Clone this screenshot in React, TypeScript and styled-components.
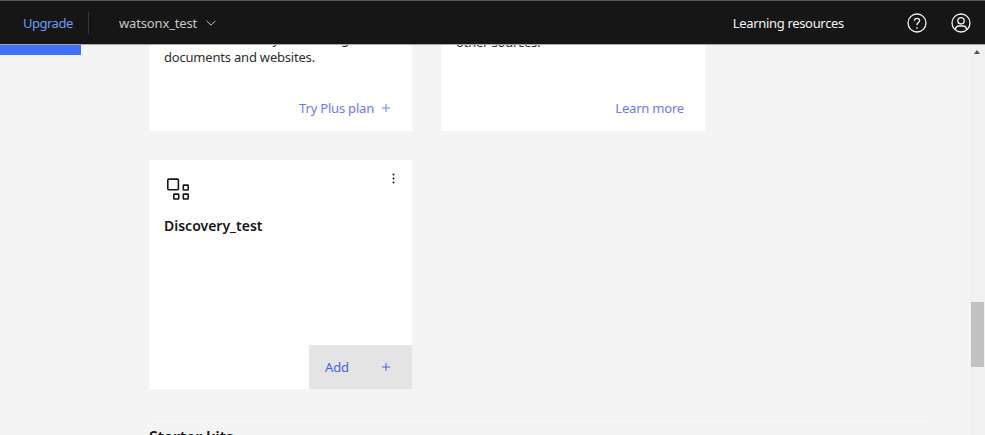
import React from "react";
import styled, { createGlobalStyle } from "styled-components";

const Global = createGlobalStyle`
  html, body { margin: 0; padding: 0; height: 100%; overflow: hidden; background: #f4f4f4; }
  * { box-sizing: border-box; }
  body { font-family: "Noto Sans", "Open Sans", "Liberation Sans", sans-serif; }
`;

const Page = styled.div`
  width: 985px;
  height: 435px;
  display: flex;
  flex-direction: column;
  overflow: hidden;
  background: #f4f4f4;
`;

const Header = styled.header`
  flex: 0 0 45px;
  height: 45px;
  display: flex;
  align-items: center;
  background: #161616;
  border-top: 1px solid #565656;
  border-bottom: 1px solid #a8a8a8;
  color: #f4f4f4;
  font-size: 13px;
`;

const Upgrade = styled.a`
  margin-left: 23px;
  width: 65px;
  color: #6c9cf5;
  letter-spacing: -0.5px;
`;

const Divider = styled.span`
  width: 1px;
  height: 22px;
  background: #393939;
`;

const Account = styled.div`
  margin-left: 30px;
  display: flex;
  align-items: center;
  gap: 9px;
  color: #c6c6c6;
  letter-spacing: -0.15px;
`;

const Resources = styled.a`
  margin-left: auto;
  color: #f4f4f4;
  letter-spacing: -0.32px;
`;

const IconSlot = styled.span<{ $left: number }>`
  display: flex;
  margin-left: ${(p) => p.$left}px;
`;

const Body = styled.div`
  flex: 1;
  min-height: 0;
  display: flex;
  overflow: hidden;
`;

const Main = styled.main`
  flex: 1;
  min-width: 0;
  display: flex;
  overflow: hidden;
`;

const Rail = styled.div`
  flex: 0 0 81px;
`;

const RailBar = styled.div`
  height: 10px;
  background: #4270fb;
`;

const Content = styled.div`
  margin-left: 68px;
  width: 778px;
  margin-top: -49px;
  flex: none;
`;

const CardRow = styled.div`
  display: flex;
  gap: 29px;
  margin-bottom: 29px;
`;

const Card = styled.article<{ $height: number; $width: number }>`
  position: relative;
  width: ${(p) => p.$width}px;
  height: ${(p) => p.$height}px;
  background: #fff;
  display: flex;
  flex-direction: column;
`;

const CardText = styled.p<{ $top: number }>`
  margin: 0;
  padding: ${(p) => p.$top}px 15px 0;
  font-size: 13px;
  line-height: 18px;
  color: #2e2e2e;
  letter-spacing: -0.2px;
`;

const CardLink = styled.a<{ $right: number }>`
  margin-top: auto;
  padding: 0 ${(p) => p.$right}px 14px 0;
  display: flex;
  justify-content: flex-end;
  align-items: center;
  gap: 8px;
  color: #6a78f6;
  font-size: 13px;
  line-height: 18px;
  letter-spacing: -0.2px;
`;

const ProductIcon = styled.span`
  display: flex;
  margin: 17px 0 0 16px;
`;

const CardTitle = styled.h3`
  margin: 15px 0 0 15px;
  font-size: 14px;
  line-height: 20px;
  font-weight: 600;
  color: #161616;
`;

const KebabBtn = styled.span`
  position: absolute;
  top: 13px;
  right: 17px;
  display: flex;
`;

const AddButton = styled.button`
  margin-top: auto;
  align-self: flex-end;
  width: 103px;
  height: 44px;
  padding: 0 22px 0 16px;
  border: 0;
  background: #e4e4e4;
  display: flex;
  align-items: center;
  justify-content: space-between;
  color: #4a5fe0;
  font: inherit;
  font-size: 13px;
  letter-spacing: -0.1px;
`;

const SectionRule = styled.hr`
  margin: 29px 0 0;
  border: 0;
  height: 1px;
  background: #eeeeee;
`;

const SectionTitle = styled.h2`
  margin: 8px 0 0;
  font-size: 16px;
  line-height: 20px;
  font-weight: 600;
  letter-spacing: -0.2px;
  color: #161616;
`;

const Scrollbar = styled.div`
  position: relative;
  flex: 0 0 15px;
  background: #f1f1f1;
`;

const ScrollUp = styled.span`
  position: absolute;
  top: 5px;
  left: 4px;
  width: 0;
  height: 0;
  border-left: 3.5px solid transparent;
  border-right: 3.5px solid transparent;
  border-bottom: 4px solid #505050;
`;

const ScrollThumb = styled.span`
  position: absolute;
  top: 257px;
  left: 1px;
  width: 13px;
  height: 65px;
  background: #c1c1c1;
`;

const Plus = ({ color }: { color: string }) => (
  <svg width="8" height="8" viewBox="0 0 8 8" fill="none" stroke={color} strokeWidth="1">
    <path d="M4 0v8M0 4h8" />
  </svg>
);

export default function App() {
  return (
    <Page>
      <Global />
      <Header>
        <Upgrade>Upgrade</Upgrade>
        <Divider />
        <Account>
          watsonx_test
          <svg width="10" height="6" viewBox="0 0 10 6" fill="none" stroke="#c6c6c6" strokeWidth="1">
            <path d="M.6.8L5 5.2 9.4.8" />
          </svg>
        </Account>
        <Resources>Learning resources</Resources>
        <IconSlot $left={63}>
          <svg width="20" height="20" viewBox="0 0 20 20" fill="none" stroke="#f4f4f4" strokeWidth="1.3">
            <circle cx="10" cy="10" r="9" />
            <path d="M7.4 7.8c0-1.5 1.1-2.5 2.6-2.5s2.6 1 2.6 2.3c0 1.1-.6 1.7-1.5 2.3-.8.5-1.1 1-1.1 1.9v.5" />
            <circle cx="10" cy="14.9" r=".5" fill="#f4f4f4" strokeWidth=".6" />
          </svg>
        </IconSlot>
        <IconSlot $left={24}>
          <svg width="20" height="20" viewBox="0 0 20 20" fill="none" stroke="#f4f4f4" strokeWidth="1.3">
            <circle cx="10" cy="10" r="9" />
            <circle cx="10" cy="7.8" r="3.2" />
            <path d="M4.4 16.6c.3-2.2 1.5-3.6 3.4-3.6h4.4c1.9 0 3.1 1.4 3.4 3.6" />
          </svg>
        </IconSlot>
        <IconSlot $left={14} />
      </Header>
      <Body>
        <Main>
          <Rail>
            <RailBar />
          </Rail>
          <Content>
            <CardRow>
              <Card $height={135} $width={263}>
                <CardText $top={34}>
                  Get answers from your existing
                  <br />
                  documents and websites.
                </CardText>
                <CardLink $right={22}>
                  Try Plus plan
                  <Plus color="#6a78f6" />
                </CardLink>
              </Card>
              <Card $height={135} $width={264}>
                <CardText $top={19}>
                  Search content from
                  <br />
                  other sources.
                </CardText>
                <CardLink $right={21}>Learn more</CardLink>
              </Card>
            </CardRow>
            <CardRow>
              <Card $height={229} $width={263}>
                <ProductIcon>
                  <svg width="24" height="24" viewBox="0 0 24 24" fill="none" stroke="#161616" strokeWidth="1.6">
                    <rect x="2.8" y="2.1" width="10.6" height="10.6" rx="1" />
                    <rect x="18.3" y="8.1" width="4.9" height="4.9" rx=".6" />
                    <rect x="8.8" y="17.1" width="4.9" height="4.9" rx=".6" />
                    <rect x="18.3" y="17.1" width="4.9" height="4.9" rx=".6" />
                  </svg>
                </ProductIcon>
                <CardTitle>Discovery_test</CardTitle>
                <KebabBtn>
                  <svg width="3" height="11" viewBox="0 0 3 11" fill="#161616">
                    <circle cx="1.5" cy="1.5" r="1" />
                    <circle cx="1.5" cy="5.5" r="1" />
                    <circle cx="1.5" cy="9.5" r="1" />
                  </svg>
                </KebabBtn>
                <AddButton>
                  Add
                  <Plus color="#4a5fe0" />
                </AddButton>
              </Card>
            </CardRow>
            <SectionRule />
            <SectionTitle>Starter kits</SectionTitle>
          </Content>
        </Main>
        <Scrollbar>
          <ScrollUp />
          <ScrollThumb />
        </Scrollbar>
      </Body>
    </Page>
  );
}
